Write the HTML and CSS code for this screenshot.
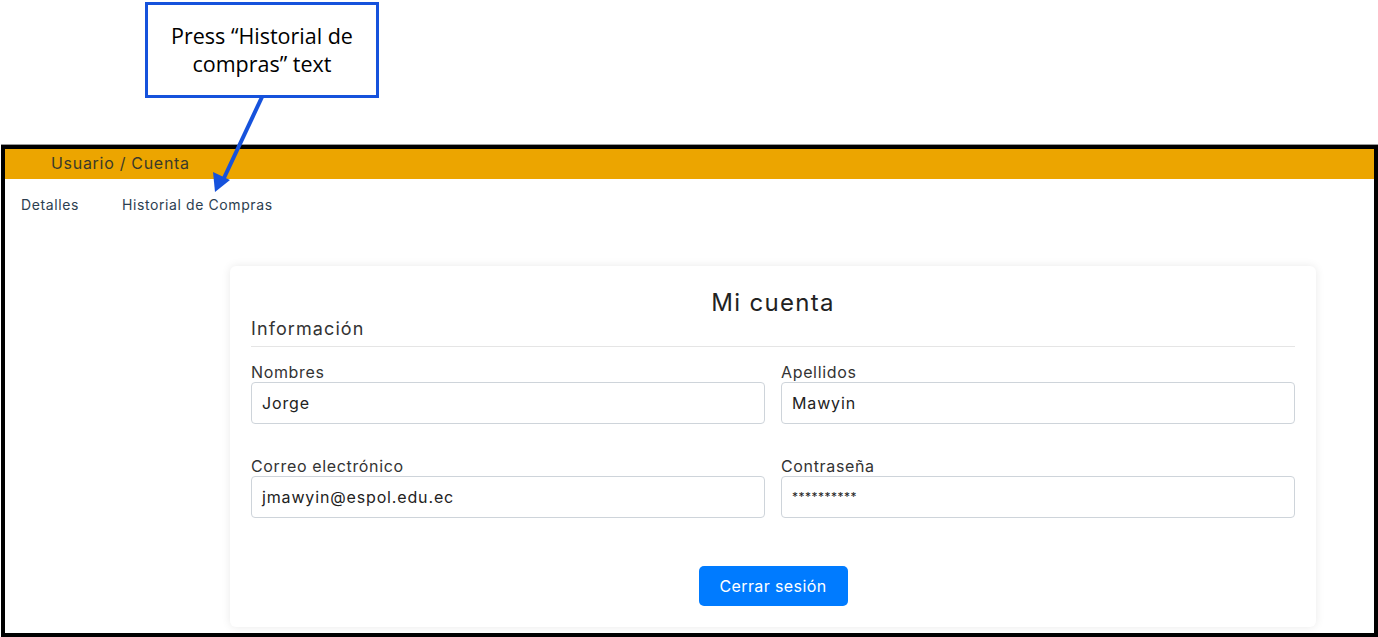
FILE: index.html
```html
<!DOCTYPE html>
<html lang="es">
<head>
<meta charset="utf-8">
<title>Mi cuenta</title>
<link rel="stylesheet" href="styles.css">
</head>
<body>
<div class="annotation">
  <div class="callout">Press “Historial de<br>compras” text</div>
</div>
<svg class="arrow" width="300" height="200" viewBox="0 0 300 200">
  <line x1="262" y1="97" x2="224" y2="178" stroke="#1652dc" stroke-width="4"/>
  <polygon points="215,192 213,172 230,180" fill="#1652dc"/>
</svg>
<div class="frame">
  <div class="topbar">Usuario / Cuenta</div>
  <nav class="tabs">
    <a class="tab">Detalles</a>
    <a class="tab">Historial de Compras</a>
  </nav>
  <div class="card">
    <h1 class="title">Mi cuenta</h1>
    <h2 class="section">Información</h2>
    <div class="grid">
      <div class="field">
        <label class="label">Nombres</label>
        <div class="input">Jorge</div>
      </div>
      <div class="field">
        <label class="label">Apellidos</label>
        <div class="input">Mawyin</div>
      </div>
      <div class="field">
        <label class="label">Correo electrónico</label>
        <div class="input">jmawyin@espol.edu.ec</div>
      </div>
      <div class="field">
        <label class="label">Contraseña</label>
        <div class="input pwd">**********</div>
      </div>
    </div>
    <div class="actions">
      <button class="btn">Cerrar sesión</button>
    </div>
  </div>
</div>
</body>
</html>
```
FILE: styles.css
```css
* { box-sizing: border-box; }
html, body { margin: 0; padding: 0; background: #fff; }
body {
  width: 1378px;
  height: 637px;
  overflow: hidden;
  position: relative;
  font-family: Inter, "Noto Sans", sans-serif;
  color: #212529;
}
.annotation {
  height: 145px;
  padding: 2px 0 0 145px;
}
.callout {
  width: 234px;
  height: 96px;
  border: 3px solid #1652dc;
  display: flex;
  align-items: center;
  justify-content: center;
  text-align: center;
  font-family: "Open Sans", sans-serif;
  font-size: 21.5px;
  line-height: 28px;
  color: #000;
}
.arrow {
  position: absolute;
  left: 0;
  top: 0;
  pointer-events: none;
  z-index: 2;
}
.frame {
  margin-left: 1px;
  width: 1377px;
  height: 492px;
  border: 4px solid #000;
  box-shadow: 0 -1px 0 #9a9a9a;
  overflow: hidden;
}
.topbar {
  height: 30px;
  background: #eca500;
  padding-left: 46px;
  font-size: 16px;
  letter-spacing: 0.7px;
  line-height: 28px;
  color: #3a3a2a;
}
.tabs {
  display: flex;
  gap: 43px;
  padding: 17px 0 0 16px;
  height: 87px;
}
.tab {
  font-size: 14px;
  letter-spacing: 0.6px;
  color: #2c3e50;
  line-height: 18px;
}
.card {
  margin-left: 225px;
  width: 1086px;
  height: 361px;
  background: #fff;
  border-radius: 6px;
  box-shadow: 0 0 10px rgba(0,0,0,0.09);
  padding: 23px 21px 0 21px;
}
.title {
  margin: 0;
  text-align: center;
  font-weight: 400;
  font-size: 24px;
  letter-spacing: 1.3px;
  line-height: 28px;
  color: #222;
}
.section {
  margin: 0;
  font-weight: 400;
  font-size: 18px;
  letter-spacing: 1.1px;
  line-height: 24px;
  color: #333;
  padding-bottom: 5px;
  border-bottom: 1px solid #e5e5e5;
}
.grid {
  display: grid;
  grid-template-columns: 1fr 1fr;
  column-gap: 16px;
  row-gap: 32px;
  margin-top: 15px;
}
.field { display: flex; flex-direction: column; }
.label {
  font-size: 16px;
  letter-spacing: 0.65px;
  line-height: 20px;
  color: #333;
}
.input {
  height: 42px;
  border: 1px solid #ced4da;
  border-radius: 4px;
  padding: 0 10px;
  font-size: 16px;
  letter-spacing: 0.85px;
  line-height: 40px;
  color: #222;
}
.pwd { font-size: 12px; letter-spacing: 0.5px; }
.actions {
  display: flex;
  justify-content: center;
  margin-top: 48px;
}
.btn {
  width: 149px;
  height: 40px;
  border: none;
  border-radius: 5px;
  background: #007bff;
  color: #fff;
  font-family: inherit;
  font-size: 16px;
  letter-spacing: 0.4px;
}
```
